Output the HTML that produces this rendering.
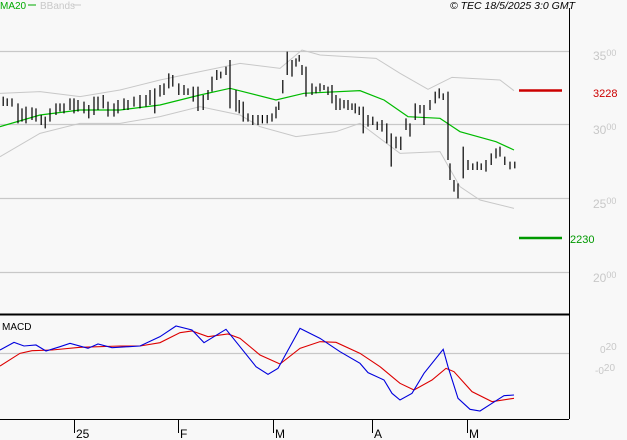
<!DOCTYPE html>
<html><head><style>
html,body{margin:0;padding:0;background:#f8f8f8;}
svg{display:block;font-family:"Liberation Sans",sans-serif;}
</style></head><body>
<svg width="627" height="440" viewBox="0 0 627 440" xmlns="http://www.w3.org/2000/svg">
<rect width="627" height="440" fill="#f8f8f8"/>
<g stroke="#c8c8c8" stroke-width="1.3">
<line x1="0" y1="51.5" x2="569" y2="51.5"/>
<line x1="0" y1="124.5" x2="569" y2="124.5"/>
<line x1="0" y1="198.5" x2="569" y2="198.5"/>
<line x1="0" y1="272.5" x2="569" y2="272.5"/>
<line x1="0" y1="353.5" x2="569" y2="353.5"/>
</g>
<line x1="569.5" y1="8" x2="569.5" y2="419" stroke="#000" stroke-width="1"/>
<line x1="0" y1="314.5" x2="569" y2="314.5" stroke="#000" stroke-width="2"/>
<line x1="0" y1="419.5" x2="569" y2="419.5" stroke="#000" stroke-width="1"/>
<g stroke="#000" stroke-width="1">
<line x1="74.5" y1="419" x2="74.5" y2="433"/>
<line x1="178.5" y1="419" x2="178.5" y2="433"/>
<line x1="273.5" y1="419" x2="273.5" y2="433"/>
<line x1="372.5" y1="419" x2="372.5" y2="433"/>
<line x1="467.5" y1="419" x2="467.5" y2="433"/>
</g>
<g font-size="12" fill="#000">
<text x="76" y="438">25</text><text x="180" y="438">F</text><text x="275" y="438">M</text><text x="374" y="438">A</text><text x="469" y="438">M</text>
</g>
<g transform="scale(0.4,0.33333)" fill="none">
<polyline vector-effect="non-scaling-stroke" stroke="#c8c8c8" stroke-width="1" points="0,280 100,275 200,290 300,270 400,240 500,215 600,190 700,205 755,150 800,165 940,175 1000,220 1070,268 1130,232 1250,240 1285,272"/>
<polyline vector-effect="non-scaling-stroke" stroke="#c8c8c8" stroke-width="1" points="0,470 100,400 200,370 300,370 400,350 500,320 600,345 650,380 740,410 840,395 900,370 1000,460 1100,455 1150,560 1200,600 1285,625"/>
<polyline vector-effect="non-scaling-stroke" stroke="#00bb00" stroke-width="1.2" points="0,380 100,345 200,330 300,330 400,315 500,285 575,265 690,300 760,280 900,272 960,300 1020,350 1100,355 1150,395 1240,425 1285,450"/>
<path vector-effect="non-scaling-stroke" stroke="#000" stroke-width="1.2" d="M8 290V318M18 295V318M30 295V320M45 310V370M55 325V365M65 320V370M80 322V360M90 325V365M103 345V375M113 350V385M125 325V365M140 310V345M150 310V335M160 310V340M175 295V330M185 295V340M195 300V335M210 305V340M222 315V355M235 290V345M245 290V330M258 285V325M270 305V350M285 310V350M295 300V340M310 295V330M320 300V330M335 290V320M350 285V325M365 285V320M375 270V315M387 265V340M400 255V290M410 250V285M422 220V265M432 225V260M447 250V285M460 255V285M470 265V285M483 260V305M495 260V333M508 285V330M520 270V300M530 230V275M542 210V240M552 215V235M565 200V225M575 180V325M590 270V335M598 300V340M608 305V365M620 340V365M632 345V375M645 345V375M656 345V370M668 345V370M680 340V365M690 320V355M697 305V330M707 240V280M718 155V225M730 180V230M740 175V200M748 165V185M755 195V225M765 200V290M780 250V285M790 260V280M800 250V275M810 255V270M820 260V285M830 255V310M840 285V330M850 295V330M860 300V325M870 300V330M880 310V330M888 310V340M898 320V345M908 320V400M920 345V380M932 350V375M943 365V390M955 360V395M967 370V430M978 400V500M990 410V445M1002 410V450M1015 355V390M1025 370V410M1038 310V360M1050 315V340M1060 315V375M1075 300V330M1088 275V310M1098 265V295M1108 280V300M1120 275V480M1125 490V540M1135 540V575M1145 550V595M1158 440V535M1170 480V510M1182 490V510M1193 485V510M1203 490V510M1215 480V515M1228 460V495M1240 445V475M1250 440V470M1262 470V495M1275 485V508M1287 485V505"/>
</g>
<g transform="translate(0,220) scale(0.4,0.33333)" fill="none">
<polyline vector-effect="non-scaling-stroke" stroke="#dd0000" stroke-width="1.1" points="0,438 50,400 80,392 130,390 200,382 300,378 350,378 400,368 450,338 480,333 520,350 570,342 600,355 650,405 700,432 750,385 800,365 840,367 900,400 950,440 1000,490 1035,510 1080,480 1115,445 1135,455 1180,515 1230,545 1285,535"/>
<polyline vector-effect="non-scaling-stroke" stroke="#0000dd" stroke-width="1.1" points="0,390 35,367 60,378 90,375 115,393 150,380 175,370 220,385 245,372 280,383 350,378 400,350 440,318 480,330 510,368 565,328 600,380 640,440 670,463 695,445 750,325 800,355 850,395 900,430 920,458 960,480 980,520 1000,540 1030,520 1060,460 1108,388 1120,440 1145,535 1175,568 1200,573 1230,550 1260,527 1285,525"/>
</g>
<line x1="519" y1="90.5" x2="562" y2="90.5" stroke="#cc0000" stroke-width="2.5"/>
<line x1="519" y1="238" x2="562" y2="238" stroke="#009900" stroke-width="2.5"/>
<g font-size="12" fill="#c8c8c8">
<text x="593" y="60">35<tspan font-size="9" dy="-4">00</tspan></text>
<text x="593" y="134">30<tspan font-size="9" dy="-4">00</tspan></text>
<text x="593" y="208">25<tspan font-size="9" dy="-4">00</tspan></text>
<text x="593" y="282">20<tspan font-size="9" dy="-4">00</tspan></text>
<text x="600" y="353" font-size="10">0<tspan dy="-3">20</tspan></text>
<text x="595" y="374" font-size="10">-0<tspan dy="-3">20</tspan></text>
</g>
<text x="593" y="97" font-size="11" fill="#cc0000">3228</text>
<text x="570" y="243" font-size="11" fill="#009900">2230</text>
<text x="2" y="330" font-size="10" fill="#000">MACD</text>
<text x="0" y="9" font-size="10" fill="#00aa00">MA20</text>
<line x1="28" y1="5" x2="36" y2="5" stroke="#00aa00" stroke-width="1"/>
<text x="40" y="9" font-size="10" fill="#c8c8c8">BBands</text>
<line x1="73" y1="5" x2="81" y2="5" stroke="#c8c8c8" stroke-width="1"/>
<text x="575" y="9" font-size="10.5" font-style="italic" fill="#000" text-anchor="end">© TEC 18/5/2025 3:0 GMT</text>
</svg>
</body></html>
